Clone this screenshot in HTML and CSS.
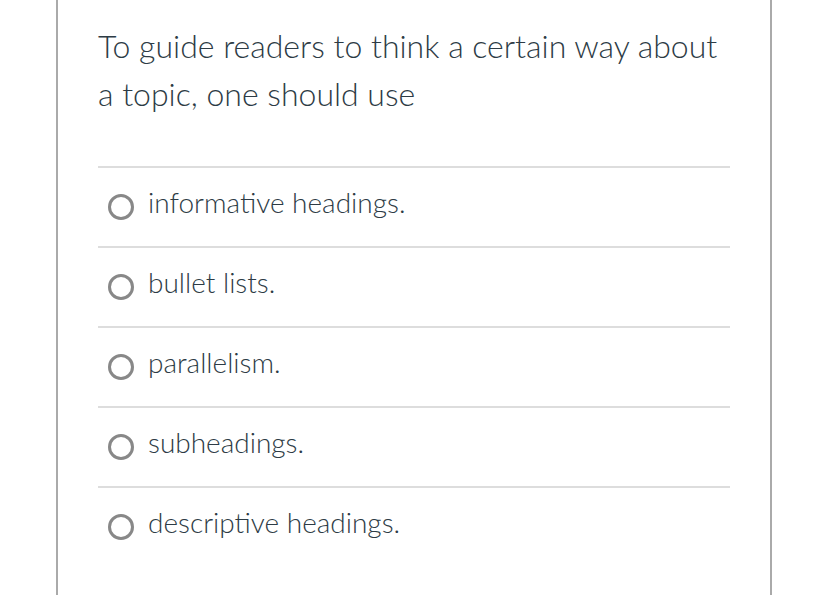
FILE: index.html
```html
<!DOCTYPE html>
<html>
<head>
<meta charset="utf-8">
<link rel="stylesheet" href="styles.css">
</head>
<body>
<div class="card">
  <div class="question">To guide readers to think a certain way about a topic, one should use</div>
  <ul class="answers">
    <li class="answer"><span class="radio"></span><span class="label">informative headings.</span></li>
    <li class="answer"><span class="radio"></span><span class="label">bullet lists.</span></li>
    <li class="answer"><span class="radio"></span><span class="label">parallelism.</span></li>
    <li class="answer"><span class="radio"></span><span class="label">subheadings.</span></li>
    <li class="answer"><span class="radio"></span><span class="label">descriptive headings.</span></li>
  </ul>
</div>
</body>
</html>
```
FILE: styles.css
```css
html, body {
  margin: 0;
  padding: 0;
  background: #fff;
  height: 100%;
  overflow: hidden;
}
body {
  font-family: Lato, "Liberation Sans", sans-serif;
  color: #2d3b45;
}
.card {
  margin-left: 56px;
  width: 716px;
  min-height: 100%;
  border-left: 2px solid #aaaaaa;
  border-right: 2px solid #aaaaaa;
  padding: 0 40px;
  box-sizing: border-box;
}
.question {
  padding-top: 22px;
  font-size: 32px;
  line-height: 48px;
  font-weight: 300;
  height: 166px;
  box-sizing: border-box;
}
.answers {
  list-style: none;
  margin: 0;
  padding: 0;
}
.answer {
  border-top: 2px solid #dddddd;
  height: 80px;
  box-sizing: border-box;
  display: flex;
  align-items: center;
  padding-left: 10px;
  gap: 14px;
}
.radio {
  width: 26px;
  height: 26px;
  border: 3px solid #888888;
  border-radius: 50%;
  box-sizing: border-box;
  flex: none;
}
.label {
  font-size: 28px;
  line-height: 32px;
  font-weight: 300;
  margin-bottom: 10px;
}
```
